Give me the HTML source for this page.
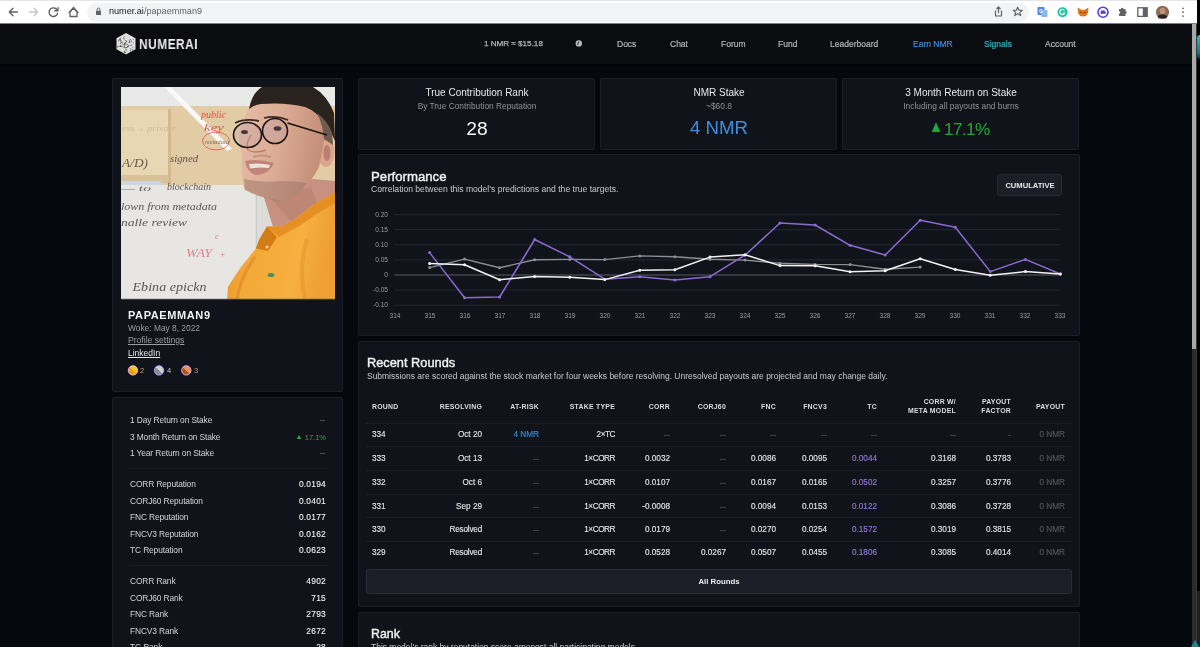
<!DOCTYPE html><html><head><meta charset="utf-8"><style>
html,body{margin:0;padding:0;width:1200px;height:647px;overflow:hidden;background:#05080d;font-family:"Liberation Sans", sans-serif;}
.t{position:absolute;white-space:pre;line-height:1;will-change:transform;}
.r{position:absolute;box-sizing:border-box;}
.card{position:absolute;box-sizing:border-box;background:#10131a;border:1px solid #1b1e26;border-radius:2px;}
svg{position:absolute;}
</style></head><body>
<div class="r" style="left:0px;top:0px;width:1197px;height:23px;background:#ffffff;"></div>
<div class="r" style="left:0px;top:0px;width:1197px;height:1px;background:#e4e6e9;"></div>
<div class="r" style="left:0px;top:23px;width:1197px;height:1px;background:#7d7e82;"></div>
<div class="r" style="left:87px;top:3px;width:942px;height:19px;background:#f1f3f4;border-radius:10px;"></div>
<svg style="left:0;top:0" width="240" height="23" viewBox="0 0 240 23">
<g fill="none" stroke-linecap="round" stroke-linejoin="round">
<path d="M17.5 12 H9.5 M13 8.2 L9.3 12 L13 15.8" stroke="#5f6368" stroke-width="1.4"/>
<path d="M29.5 12 H37.5 M34 8.2 L37.7 12 L34 15.8" stroke="#c4c7cc" stroke-width="1.4"/>
<path d="M57.2 10.2 A4.3 4.3 0 1 0 57.5 13.5" stroke="#5f6368" stroke-width="1.4"/>
<path d="M58 7.6 V10.8 H54.8" stroke="#5f6368" stroke-width="1.4"/>
<path d="M70 12 L73.5 8 L77 12 V16.5 H70 Z" stroke="#5f6368" stroke-width="1.3"/>
<path d="M69 12.6 L73.5 7.3 L78 12.6" stroke="#5f6368" stroke-width="1.3"/>
</g>
<rect x="96" y="10.8" width="5" height="4.2" rx="0.6" fill="#5f6368"/>
<path d="M97.1 10.9 V9.5 A1.4 1.4 0 0 1 99.9 9.5 V10.9" fill="none" stroke="#5f6368" stroke-width="1"/>
</svg>
<div class="t" style="left:109px;top:7.1px;font-size:9.1px;color:#202124">numer.ai<span style="color:#5f6368">/papaemman9</span></div>
<svg style="left:980;top:0;left:980px" width="220" height="23" viewBox="980 0 220 23">
<g fill="none" stroke="#5f6368" stroke-width="1.2" stroke-linejoin="round">
<path d="M995.5 10.5 V16 H1001.5 V10.5"/><path d="M998.5 13 V7 M996.5 9 L998.5 7 L1000.5 9"/>
<path d="M1017.7 7.2 L1019 10.2 L1022.2 10.4 L1019.8 12.4 L1020.6 15.6 L1017.7 13.8 L1014.8 15.6 L1015.6 12.4 L1013.2 10.4 L1016.4 10.2 Z"/>
</g>
<rect x="1037.5" y="7" width="7" height="8" rx="1" fill="#4a86e8"/>
<rect x="1041" y="10" width="6.5" height="7" rx="1" fill="#8ab4f8"/>
<text x="1039" y="13" font-size="5" fill="#fff" font-family="Liberation Sans" font-weight="700">G</text>
<circle cx="1062.5" cy="12.2" r="5" fill="#15c39a"/>
<path d="M1064.5 10.5 A2.6 2.6 0 1 0 1064.8 13 H1062.5" fill="none" stroke="#fff" stroke-width="1.2"/>
<path d="M1077.5 7.5 L1082 10 L1083 9.8 L1084 10 L1088.5 7.5 L1088 13 L1086 16 L1083 16.5 L1080 16 L1078 13 Z" fill="#e2761b"/>
<path d="M1080 12 L1082.3 13 M1086 12 L1083.7 13" stroke="#7a3a10" stroke-width="0.9"/>
<circle cx="1103" cy="12.2" r="5" fill="none" stroke="#5b3fd6" stroke-width="1.6"/>
<path d="M1100.5 12.5 A2.5 2 0 0 1 1105.5 12 L1106.5 13.5 L1101 14 Z" fill="#5b3fd6"/>
<path d="M1119 9 H1121 A1.2 1.2 0 0 1 1123.4 9 H1125.5 V11.3 A1.2 1.2 0 0 1 1125.5 13.7 V16 H1119 V13.7 A1.2 1.2 0 0 0 1119 11.3 Z" fill="#5f6368"/>
<rect x="1137.8" y="7.8" width="9.4" height="8.6" fill="none" stroke="#5f6368" stroke-width="1.3"/>
<rect x="1142.8" y="7.8" width="4.4" height="8.6" fill="#5f6368"/>
<circle cx="1162.5" cy="12.2" r="6.5" fill="#8a6a5a"/>
<path d="M1157.5 16.5 Q1162.5 12 1167.5 16.5 L1166 18.5 H1159 Z" fill="#2a2420"/>
<ellipse cx="1162.5" cy="11" rx="2.8" ry="3.2" fill="#c09070"/>
<circle cx="1183" cy="8.3" r="0.9" fill="#5f6368"/><circle cx="1183" cy="12.2" r="0.9" fill="#5f6368"/><circle cx="1183" cy="16.1" r="0.9" fill="#5f6368"/>
</svg>
<div class="r" style="left:0px;top:24px;width:1192px;height:40px;background:#0b0c10;"></div>
<div class="r" style="left:0px;top:64px;width:1192px;height:2px;background:#05060a;"></div>
<div class="r" style="left:1192px;top:24px;width:5px;height:623px;background:#2b2b2d;"></div>
<div class="r" style="left:1192px;top:24px;width:5px;height:325px;background:#a9a9a9;"></div>
<div class="r" style="left:1197px;top:0px;width:3px;height:647px;background:#000000;"></div>
<div class="r" style="left:1197px;top:591px;width:3px;height:56px;background:#1f1f21;"></div>
<div class="r" style="left:1196px;top:24px;width:1px;height:623px;background:#38383a;"></div>
<svg style="left:1190px;top:638px" width="10" height="9" viewBox="0 0 10 9"><path d="M1 9 L5 2 L9 9 Z" fill="#1a8a90"/></svg>
<div class="r" style="left:1196.5px;top:35px;width:3.5px;height:24px;background:linear-gradient(#23c0c4,#0f7f86 70%,#06363a);border-radius:3px 0 0 3px;"></div>
<svg style="left:114px;top:31px" width="24" height="26" viewBox="0 0 24 26"><defs><clipPath id="hx"><path d="M12 2 L21.5 7.3 V18.3 L12 23.6 L2.5 18.3 V7.3 Z"/></clipPath></defs><path d="M12 2 L21.5 7.3 V18.3 L12 23.6 L2.5 18.3 V7.3 Z" fill="#e0e0e0"/><g clip-path="url(#hx)"><rect x="9.2" y="7.6" width="1.7" height="0.7" fill="#5a5a5a" transform="rotate(0 9.2 7.6)"/><rect x="9.9" y="6.0" width="1.5" height="0.6" fill="#5a5a5a" transform="rotate(90 9.9 6.0)"/><rect x="10.7" y="9.1" width="1.6" height="0.6" fill="#5a5a5a" transform="rotate(0 10.7 9.1)"/><rect x="19.2" y="15.7" width="1.6" height="0.6" fill="#5a5a5a" transform="rotate(90 19.2 15.7)"/><rect x="4.8" y="8.8" width="1.6" height="0.7" fill="#5a5a5a" transform="rotate(90 4.8 8.8)"/><rect x="6.3" y="7.0" width="1.2" height="1.3" fill="#5a5a5a" transform="rotate(45 6.3 7.0)"/><rect x="5.6" y="14.7" width="1.1" height="0.7" fill="#5a5a5a" transform="rotate(0 5.6 14.7)"/><rect x="13.0" y="15.5" width="1.5" height="1.0" fill="#5a5a5a" transform="rotate(-45 13.0 15.5)"/><rect x="11.4" y="20.7" width="1.3" height="0.8" fill="#5a5a5a" transform="rotate(45 11.4 20.7)"/><rect x="15.2" y="9.1" width="1.6" height="1.0" fill="#5a5a5a" transform="rotate(-45 15.2 9.1)"/><rect x="15.7" y="9.9" width="2.2" height="0.7" fill="#5a5a5a" transform="rotate(90 15.7 9.9)"/><rect x="6.6" y="10.8" width="2.1" height="0.9" fill="#5a5a5a" transform="rotate(0 6.6 10.8)"/><rect x="16.2" y="14.7" width="2.0" height="0.9" fill="#5a5a5a" transform="rotate(-45 16.2 14.7)"/><rect x="13.5" y="14.9" width="1.4" height="1.3" fill="#5a5a5a" transform="rotate(-45 13.5 14.9)"/><rect x="11.6" y="16.3" width="0.9" height="1.2" fill="#5a5a5a" transform="rotate(90 11.6 16.3)"/><rect x="8.6" y="11.6" width="1.7" height="0.6" fill="#5a5a5a" transform="rotate(90 8.6 11.6)"/><rect x="9.7" y="15.4" width="1.5" height="0.8" fill="#5a5a5a" transform="rotate(-45 9.7 15.4)"/><rect x="6.1" y="9.2" width="1.3" height="1.3" fill="#5a5a5a" transform="rotate(0 6.1 9.2)"/><rect x="6.7" y="11.8" width="1.2" height="0.7" fill="#5a5a5a" transform="rotate(90 6.7 11.8)"/><rect x="17.8" y="9.7" width="1.4" height="0.9" fill="#5a5a5a" transform="rotate(90 17.8 9.7)"/><rect x="19.3" y="7.6" width="1.0" height="0.8" fill="#5a5a5a" transform="rotate(45 19.3 7.6)"/><rect x="4.2" y="19.1" width="1.1" height="0.8" fill="#5a5a5a" transform="rotate(45 4.2 19.1)"/><rect x="10.7" y="11.3" width="1.6" height="1.4" fill="#5a5a5a" transform="rotate(0 10.7 11.3)"/><rect x="11.3" y="19.8" width="2.1" height="1.1" fill="#5a5a5a" transform="rotate(90 11.3 19.8)"/><rect x="10.4" y="11.7" width="1.5" height="0.9" fill="#5a5a5a" transform="rotate(45 10.4 11.7)"/><rect x="5.1" y="8.5" width="1.0" height="0.9" fill="#5a5a5a" transform="rotate(0 5.1 8.5)"/><rect x="5.6" y="14.6" width="1.6" height="1.4" fill="#5a5a5a" transform="rotate(0 5.6 14.6)"/><rect x="5.1" y="8.5" width="1.3" height="1.1" fill="#5a5a5a" transform="rotate(-45 5.1 8.5)"/><rect x="13.6" y="13.1" width="1.0" height="1.0" fill="#5a5a5a" transform="rotate(90 13.6 13.1)"/><rect x="11.7" y="10.3" width="1.0" height="1.2" fill="#5a5a5a" transform="rotate(-45 11.7 10.3)"/><rect x="11.7" y="16.8" width="1.5" height="0.8" fill="#5a5a5a" transform="rotate(-45 11.7 16.8)"/><rect x="6.3" y="14.2" width="0.8" height="1.0" fill="#5a5a5a" transform="rotate(0 6.3 14.2)"/><rect x="15.1" y="9.4" width="1.3" height="0.7" fill="#5a5a5a" transform="rotate(45 15.1 9.4)"/><rect x="12.5" y="18.2" width="1.3" height="0.8" fill="#5a5a5a" transform="rotate(45 12.5 18.2)"/><rect x="16.9" y="18.9" width="1.8" height="0.8" fill="#5a5a5a" transform="rotate(90 16.9 18.9)"/><rect x="9.7" y="5.5" width="0.8" height="0.8" fill="#5a5a5a" transform="rotate(-45 9.7 5.5)"/><rect x="7.1" y="15.3" width="1.3" height="1.2" fill="#5a5a5a" transform="rotate(-45 7.1 15.3)"/><rect x="19.3" y="11.2" width="1.1" height="0.8" fill="#5a5a5a" transform="rotate(45 19.3 11.2)"/><rect x="9.4" y="13.2" width="2.2" height="1.1" fill="#5a5a5a" transform="rotate(0 9.4 13.2)"/><rect x="11.7" y="16.1" width="1.9" height="0.7" fill="#5a5a5a" transform="rotate(0 11.7 16.1)"/><rect x="18.6" y="18.3" width="1.9" height="1.0" fill="#5a5a5a" transform="rotate(45 18.6 18.3)"/><rect x="10.9" y="15.8" width="0.9" height="1.4" fill="#5a5a5a" transform="rotate(90 10.9 15.8)"/><rect x="11.4" y="17.6" width="0.9" height="0.7" fill="#5a5a5a" transform="rotate(45 11.4 17.6)"/><rect x="4.4" y="15.0" width="1.5" height="1.1" fill="#5a5a5a" transform="rotate(90 4.4 15.0)"/><rect x="14.5" y="11.0" width="1.6" height="0.7" fill="#5a5a5a" transform="rotate(0 14.5 11.0)"/><rect x="16.8" y="17.3" width="0.9" height="1.2" fill="#5a5a5a" transform="rotate(45 16.8 17.3)"/></g></svg>
<div class="t" style="top:36.97px;font-size:14px;color:#ececec;font-weight:700;letter-spacing:0.6px;left:139px;transform:scaleX(0.85);transform-origin:0 0;">NUMERAI</div>
<div class="t" style="top:39.66px;font-size:8.1px;color:#b3b4b8;left:483.6px;-webkit-text-stroke:0.25px #b3b4b8;">1 NMR ≈ $15.18</div>
<svg style="left:575px;top:40px" width="8" height="8" viewBox="0 0 8 8">
<circle cx="3.8" cy="3.4" r="3.2" fill="#b8babe"/><path d="M3.7 1.1 Q1.7 3 2.6 5.8 Q4.3 3.4 3.7 1.1 Z" fill="#0b0c10"/>
</svg>
<div class="t" style="top:39.82px;font-size:8.5px;color:#b3b4b8;left:617px;-webkit-text-stroke:0.2px #b3b4b8;">Docs</div>
<div class="t" style="top:39.82px;font-size:8.5px;color:#b3b4b8;left:669.6px;-webkit-text-stroke:0.2px #b3b4b8;">Chat</div>
<div class="t" style="top:39.82px;font-size:8.5px;color:#b3b4b8;left:720.6px;-webkit-text-stroke:0.2px #b3b4b8;">Forum</div>
<div class="t" style="top:39.82px;font-size:8.5px;color:#b3b4b8;left:777.6px;-webkit-text-stroke:0.2px #b3b4b8;">Fund</div>
<div class="t" style="top:39.82px;font-size:8.5px;color:#b3b4b8;left:830px;-webkit-text-stroke:0.2px #b3b4b8;">Leaderboard</div>
<div class="t" style="top:39.82px;font-size:8.5px;color:#3e8fd9;left:912.5px;-webkit-text-stroke:0.2px #3e8fd9;">Earn NMR</div>
<div class="t" style="top:39.82px;font-size:8.5px;color:#2fb2c2;left:983.5px;-webkit-text-stroke:0.2px #2fb2c2;">Signals</div>
<div class="t" style="top:39.82px;font-size:8.5px;color:#b3b4b8;left:1045px;-webkit-text-stroke:0.2px #b3b4b8;">Account</div>
<div class="card" style="left:112px;top:78px;width:231px;height:314px"></div>
<svg style="left:121px;top:87px" width="214" height="213" viewBox="0 0 214 213">
<defs>
<filter id="bl" x="-10%" y="-10%" width="120%" height="120%"><feGaussianBlur stdDeviation="0.6"/></filter>
<filter id="bl3" x="-10%" y="-10%" width="120%" height="120%"><feGaussianBlur stdDeviation="0.55"/></filter>
<linearGradient id="skin" x1="0" y1="0" x2="1" y2="0.2">
<stop offset="0" stop-color="#e6bca8"/><stop offset="0.5" stop-color="#dcac94"/><stop offset="1" stop-color="#c48e78"/></linearGradient>
<linearGradient id="shirt" x1="0" y1="0" x2="1" y2="0.2">
<stop offset="0" stop-color="#e38f20"/><stop offset="0.3" stop-color="#f3a836"/><stop offset="0.75" stop-color="#f6b040"/><stop offset="1" stop-color="#eea034"/></linearGradient>
</defs>
<rect width="214" height="213" fill="#e6e5e1"/>
<g filter="url(#bl)">
<rect x="0" y="0" width="214" height="21" fill="#e9e9e8"/>
<rect x="0" y="19" width="214" height="79" fill="#e2cca6"/>
<rect x="0" y="23" width="47" height="65" fill="#e9d7b4"/>
<rect x="47" y="22" width="3" height="75" fill="#d2b990"/>
<rect x="0" y="88" width="47" height="8" fill="#d8c098"/>
<rect x="0" y="94" width="40" height="9" fill="#cbd6df"/>
<rect x="0" y="98" width="136" height="115" fill="#e7e6e2"/>
<rect x="136" y="98" width="78" height="115" fill="#dddcd8"/>
<rect x="134.8" y="98" width="1" height="66" fill="#c4c6c8"/>
<polygon points="43,0 50,0 111,62 106,64" fill="#fafaf8"/>
</g>
<g font-family="Liberation Serif" font-style="italic" filter="url(#bl)" opacity="0.88" lengthAdjust="spacingAndGlyphs">
<text x="1" y="44" font-size="8" fill="#cdb690" textLength="54" lengthAdjust="spacingAndGlyphs">ess→ private</text>
<text x="80" y="31" font-size="10" fill="#d8433c" textLength="25" lengthAdjust="spacingAndGlyphs">public</text>
<text x="83" y="44" font-size="10" fill="#d8433c" textLength="20" lengthAdjust="spacingAndGlyphs">key</text>
<ellipse cx="95" cy="54" rx="13.5" ry="9" fill="none" stroke="#d8433c" stroke-width="0.8"/>
<text x="84" y="57" font-size="7" fill="#7a5a48" textLength="24" lengthAdjust="spacingAndGlyphs">metadata</text>
<text x="1" y="80" font-size="13" fill="#5a4a3a" textLength="26" lengthAdjust="spacingAndGlyphs">A/D)</text>
<text x="49" y="75" font-size="10" fill="#4a3e34" textLength="28" lengthAdjust="spacingAndGlyphs">signed</text>
<text x="46" y="103" font-size="10" fill="#4a3e34" textLength="44" lengthAdjust="spacingAndGlyphs">blockchain</text>
<text x="0" y="104" font-size="8" fill="#4a4a4a" textLength="30" lengthAdjust="spacingAndGlyphs">—  to</text>
<text x="0" y="122.5" font-size="11" fill="#444" textLength="96" lengthAdjust="spacingAndGlyphs">lown from  metadata</text>
<text x="0" y="139" font-size="11" fill="#444" textLength="66" lengthAdjust="spacingAndGlyphs">nalle   review</text>
<text x="65" y="169.5" font-size="13" fill="#e56e84" textLength="26" lengthAdjust="spacingAndGlyphs">WAY</text>
<text x="94" y="152" font-size="9" fill="#e56e84">c</text>
<text x="98" y="171" font-size="10" fill="#e56e84">+</text>
<text x="11.5" y="203.5" font-size="12" fill="#444" textLength="74" lengthAdjust="spacingAndGlyphs">Ebina  epickn</text>
</g>
<g filter="url(#bl3)">
<!-- neck -->
<path d="M141 104 L192 92 L214 94 L214 108 L192 119 L177 131 L161 140 L152 140 Z" fill="#c89080"/>
<path d="M150 112 L190 100 L196 116 L170 134 Z" fill="#b07a68" opacity="0.45"/>
<!-- ear -->
<ellipse cx="205" cy="65" rx="8.5" ry="15" fill="#dba48c"/>
<ellipse cx="206" cy="66" rx="3.5" ry="8" fill="#b98070"/>
<!-- face -->
<path d="M131 14 Q141 8 177 8 Q190 13 202 24 Q210 36 203 54 L198 80 Q192 92 183 100 Q174 111 166 115 Q140 111 123 102 Q120 85 121 68 Q117 55 119 42 Q124 28 131 14 Z" fill="url(#skin)"/>
<!-- hair -->
<path d="M128 22 Q131 6 141 0 L192 0 Q206 8 213 26 L214 54 Q210 44 204 36 Q195 24 184 20 Q165 15 140 17 Q133 18 128 22 Z" fill="#2a221d"/>
<path d="M196 26 Q207 34 211 46 L212 58 L203 52 Q202 38 196 26 Z" fill="#6e5a50"/>
<!-- beard -->
<path d="M123 92 Q140 96 160 94 Q175 94 186 96 Q176 110 166 115 Q140 112 124 103 Z" fill="#9a7464" opacity="0.5"/>
<path d="M132 70 Q140 67 150 70" stroke="#a88070" stroke-width="2" fill="none" opacity="0.6"/>
<!-- mouth -->
<path d="M124 74 Q138 71 153 76 Q148 88 134 88 Q126 85 124 74 Z" fill="#c08478"/>
<path d="M128 77 Q139 75.5 149 78 L148 81 Q139 80 129 81.5 Z" fill="#ece4dc"/>
<!-- nose -->
<path d="M130 48 Q124 58 127 63 Q134 67 145 63" fill="none" stroke="#b88068" stroke-width="1.4"/>
<!-- eyebrows -->
<path d="M114 36 Q124 31 138 34 M143 31 Q155 28 167 33" stroke="#3a2a24" stroke-width="1.8" fill="none"/>
<!-- eyes -->
<ellipse cx="123.5" cy="45" rx="3.4" ry="2.1" fill="#2a1e1a"/>
<ellipse cx="156.5" cy="41.5" rx="3.8" ry="2.3" fill="#2a1e1a"/>
<!-- glasses -->
<ellipse cx="126.5" cy="48" rx="14" ry="12.5" fill="#a890a8" fill-opacity="0.22" stroke="#1c1412" stroke-width="1.6"/>
<ellipse cx="154" cy="44" rx="12.5" ry="12.5" fill="#a890a8" fill-opacity="0.22" stroke="#1c1412" stroke-width="1.6"/>
<path d="M166.5 36 L206 48" stroke="#1c1412" stroke-width="1.6" fill="none"/>
<!-- shirt -->
<path d="M106 213 L107 200 Q113 190 120 180 L135 161.5 L138 153 L146 139.5 L161 139.5 L177 130 L192 118 L214 105.5 L214 213 Z" fill="url(#shirt)"/>
<path d="M146 139.5 L161 139.5 L177 130 L192 118 L214 105.5 L214 116 Q196 126 180 138 L158 150 Z" fill="#e68f22"/>
<path d="M138 153 L146 139.5 L156 150 L147 164 L135 161.5 Z" fill="#d27c18"/>
<path d="M116 213 Q118 192 134 170" stroke="#d58422" stroke-width="3" fill="none" opacity="0.55"/>
<path d="M184 213 Q177 182 186 152" stroke="#dc8e26" stroke-width="4" fill="none" opacity="0.4"/>
<ellipse cx="150" cy="188" rx="3.5" ry="2" fill="#4a9060"/>
<circle cx="146" cy="160" r="1.5" fill="#f2d4a8"/>
</g>
<rect x="0" y="211.8" width="214" height="1.2" fill="#3a3c40"/>
</svg>

<div class="t" style="top:309.70px;font-size:11px;color:#f2f2f2;font-weight:700;letter-spacing:0.6px;left:128px;">PAPAEMMAN9</div>
<div class="t" style="top:323.90px;font-size:8.4px;color:#9b9da3;left:128px;">Woke: May 8, 2022</div>
<div class="t" style="top:336.03px;font-size:8.6px;color:#9b9da3;left:128px;text-decoration:underline;text-underline-offset:1px;">Profile settings</div>
<div class="t" style="top:349.12px;font-size:8.5px;color:#e6e6e6;left:128px;text-decoration:underline;text-underline-offset:1px;">LinkedIn</div>
<svg style="left:124px;top:363px" width="80" height="16" viewBox="124 363 80 16">
<defs>
<linearGradient id="g1" x1="0" y1="1" x2="1" y2="0"><stop offset="0.5" stop-color="#f29a0e"/><stop offset="0.5" stop-color="#f7c51c"/></linearGradient>
<linearGradient id="g2" x1="0" y1="1" x2="1" y2="0"><stop offset="0.5" stop-color="#8c8c8c"/><stop offset="0.5" stop-color="#cfcfcf"/></linearGradient>
<linearGradient id="g3" x1="0" y1="1" x2="1" y2="0"><stop offset="0.5" stop-color="#a8581c"/><stop offset="0.5" stop-color="#e3915a"/></linearGradient>
</defs>
<circle cx="133" cy="370.4" r="5.6" fill="#2e1470"/>
<circle cx="133" cy="370.4" r="4.6" fill="url(#g1)" stroke="#f6c8c0" stroke-width="0.9"/>
<circle cx="159" cy="370.4" r="5.6" fill="#2e1470"/>
<circle cx="159" cy="370.4" r="4.6" fill="url(#g2)" stroke="#b7a6f4" stroke-width="0.9"/>
<circle cx="186.3" cy="370.4" r="5.6" fill="#2e1470"/>
<circle cx="186.3" cy="370.4" r="4.6" fill="url(#g3)" stroke="#f2b6c6" stroke-width="0.9"/>
</svg>
<div class="t" style="top:366.96px;font-size:7.5px;color:#c9a24e;left:140.3px;">2</div>
<div class="t" style="top:366.96px;font-size:7.5px;color:#c6c6c6;left:167px;">4</div>
<div class="t" style="top:366.96px;font-size:7.5px;color:#c29272;left:193.7px;">3</div>
<div class="card" style="left:112px;top:397px;width:231px;height:300px"></div>
<div class="t" style="top:415.90px;font-size:8.4px;color:#d3d4d7;letter-spacing:-0.12px;left:129.5px;">1 Day Return on Stake</div>
<div class="t" style="top:432.90px;font-size:8.4px;color:#d3d4d7;letter-spacing:-0.12px;left:129.5px;">3 Month Return on Stake</div>
<div class="t" style="top:449.40px;font-size:8.4px;color:#d3d4d7;letter-spacing:-0.12px;left:129.5px;">1 Year Return on Stake</div>
<div class="r" style="left:319.8px;top:419.8px;width:5.199999999999989px;height:1.0px;background:#4b4e55;"></div>
<div class="r" style="left:319.8px;top:452.9px;width:5.199999999999989px;height:1.0px;background:#4b4e55;"></div>
<svg style="left:296px;top:433.5px" width="6" height="6" viewBox="0 0 6 6"><path d="M0.8 5 L3 1 L5.2 5 Z" fill="#22b034"/></svg>
<div class="t" style="top:433.66px;font-size:7.5px;color:#22b034;left:-274px;width:600px;text-align:right;">17.1%</div>
<div class="r" style="left:128.5px;top:468px;width:199.0px;height:1px;background:#1a1d24;"></div>
<div class="t" style="top:479.90px;font-size:8.4px;color:#d3d4d7;letter-spacing:-0.12px;left:129.5px;">CORR Reputation</div>
<div class="t" style="top:479.90px;font-size:8.4px;color:#f4f4f4;letter-spacing:0.25px;left:-274px;width:600px;text-align:right;-webkit-text-stroke:0.1px #f4f4f4;">0.0194</div>
<div class="t" style="top:496.60px;font-size:8.4px;color:#d3d4d7;letter-spacing:-0.12px;left:129.5px;">CORJ60 Reputation</div>
<div class="t" style="top:496.60px;font-size:8.4px;color:#f4f4f4;letter-spacing:0.25px;left:-274px;width:600px;text-align:right;-webkit-text-stroke:0.1px #f4f4f4;">0.0401</div>
<div class="t" style="top:513.20px;font-size:8.4px;color:#d3d4d7;letter-spacing:-0.12px;left:129.5px;">FNC Reputation</div>
<div class="t" style="top:513.20px;font-size:8.4px;color:#f4f4f4;letter-spacing:0.25px;left:-274px;width:600px;text-align:right;-webkit-text-stroke:0.1px #f4f4f4;">0.0177</div>
<div class="t" style="top:529.50px;font-size:8.4px;color:#d3d4d7;letter-spacing:-0.12px;left:129.5px;">FNCV3 Reputation</div>
<div class="t" style="top:529.50px;font-size:8.4px;color:#f4f4f4;letter-spacing:0.25px;left:-274px;width:600px;text-align:right;-webkit-text-stroke:0.1px #f4f4f4;">0.0162</div>
<div class="t" style="top:546.10px;font-size:8.4px;color:#d3d4d7;letter-spacing:-0.12px;left:129.5px;">TC Reputation</div>
<div class="t" style="top:546.10px;font-size:8.4px;color:#f4f4f4;letter-spacing:0.25px;left:-274px;width:600px;text-align:right;-webkit-text-stroke:0.1px #f4f4f4;">0.0623</div>
<div class="r" style="left:128.5px;top:565px;width:199.0px;height:1px;background:#1a1d24;"></div>
<div class="t" style="top:577.40px;font-size:8.4px;color:#d3d4d7;letter-spacing:-0.12px;left:129.5px;">CORR Rank</div>
<div class="t" style="top:577.40px;font-size:8.4px;color:#f4f4f4;letter-spacing:0.25px;left:-274px;width:600px;text-align:right;-webkit-text-stroke:0.1px #f4f4f4;">4902</div>
<div class="t" style="top:593.70px;font-size:8.4px;color:#d3d4d7;letter-spacing:-0.12px;left:129.5px;">CORJ60 Rank</div>
<div class="t" style="top:593.70px;font-size:8.4px;color:#f4f4f4;letter-spacing:0.25px;left:-274px;width:600px;text-align:right;-webkit-text-stroke:0.1px #f4f4f4;">715</div>
<div class="t" style="top:610.30px;font-size:8.4px;color:#d3d4d7;letter-spacing:-0.12px;left:129.5px;">FNC Rank</div>
<div class="t" style="top:610.30px;font-size:8.4px;color:#f4f4f4;letter-spacing:0.25px;left:-274px;width:600px;text-align:right;-webkit-text-stroke:0.1px #f4f4f4;">2793</div>
<div class="t" style="top:626.90px;font-size:8.4px;color:#d3d4d7;letter-spacing:-0.12px;left:129.5px;">FNCV3 Rank</div>
<div class="t" style="top:626.90px;font-size:8.4px;color:#f4f4f4;letter-spacing:0.25px;left:-274px;width:600px;text-align:right;-webkit-text-stroke:0.1px #f4f4f4;">2672</div>
<div class="t" style="top:643.40px;font-size:8.4px;color:#d3d4d7;letter-spacing:-0.12px;left:129.5px;">TC Rank</div>
<div class="t" style="top:643.40px;font-size:8.4px;color:#f4f4f4;letter-spacing:0.25px;left:-274px;width:600px;text-align:right;-webkit-text-stroke:0.1px #f4f4f4;">28</div>
<div class="card" style="left:358px;top:78px;width:237px;height:72px"></div>
<div class="card" style="left:600px;top:78px;width:237px;height:72px"></div>
<div class="card" style="left:842px;top:78px;width:237px;height:72px"></div>
<div class="t" style="top:88.35px;font-size:10px;color:#e8e8ea;left:-23.5px;width:1000px;text-align:center;">True Contribution Rank</div>
<div class="t" style="top:101.94px;font-size:8.36px;color:#8f9197;left:-23.5px;width:1000px;text-align:center;">By True Contribution Reputation</div>
<div class="t" style="top:118.98px;font-size:19.2px;color:#f4f4f4;left:-23.5px;width:1000px;text-align:center;">28</div>
<div class="t" style="top:88.25px;font-size:10px;color:#e8e8ea;left:218.5px;width:1000px;text-align:center;">NMR Stake</div>
<div class="t" style="top:102.00px;font-size:8.4px;color:#8f9197;left:218.5px;width:1000px;text-align:center;">~$60.8</div>
<div class="t" style="top:119.48px;font-size:18.6px;color:#3b8fe0;left:218.5px;width:1000px;text-align:center;">4 NMR</div>
<div class="t" style="top:88.41px;font-size:10.05px;color:#e8e8ea;left:460.5px;width:1000px;text-align:center;">3 Month Return on Stake</div>
<div class="t" style="top:101.62px;font-size:8.38px;color:#8f9197;left:460.5px;width:1000px;text-align:center;">Including all payouts and burns</div>
<svg style="left:931px;top:121px" width="11" height="12" viewBox="0 0 11 12"><path d="M0.8 11 L5 1.2 L9.4 11 Z" fill="#22a834"/></svg>
<div class="t" style="top:120.67px;font-size:17.2px;color:#22a834;left:943.9px;letter-spacing:-0.6px;">17.1%</div>
<div class="card" style="left:358px;top:154px;width:722px;height:182px"></div>
<div class="t" style="top:169.85px;font-size:13.2px;color:#f2f2f2;left:370.5px;-webkit-text-stroke:0.4px #f2f2f2;">Performance</div>
<div class="t" style="top:185.45px;font-size:8.58px;color:#c9cacd;left:370.5px;">Correlation between this model’s predictions and the true targets.</div>
<div class="r" style="left:997px;top:174px;width:65px;height:22px;background:#1b1e27;border:1px solid #262a33;border-radius:3px"></div>
<div class="t" style="top:181.78px;font-size:7.6px;color:#e8e8e8;font-weight:700;left:529.5px;width:1000px;text-align:center;">CUMULATIVE</div>
<svg style="left:0;top:0" width="1200" height="647" viewBox="0 0 1200 647">
<line x1="394.5" x2="1060.4" y1="214.60" y2="214.60" stroke="#242831" stroke-width="1"/>
<line x1="394.5" x2="1060.4" y1="229.70" y2="229.70" stroke="#242831" stroke-width="1"/>
<line x1="394.5" x2="1060.4" y1="244.80" y2="244.80" stroke="#242831" stroke-width="1"/>
<line x1="394.5" x2="1060.4" y1="259.90" y2="259.90" stroke="#242831" stroke-width="1"/>
<line x1="394.5" x2="1060.4" y1="290.10" y2="290.10" stroke="#242831" stroke-width="1"/>
<line x1="394.5" x2="1060.4" y1="305.20" y2="305.20" stroke="#242831" stroke-width="1"/>
<line x1="394.5" x2="1060.4" y1="275" y2="275" stroke="#5a5d64" stroke-width="1"/>
<polyline points="429.6,267.6 464.6,259.1 499.6,267.7 534.7,259.8 569.8,259.4 604.8,259.6 639.8,255.9 674.9,256.7 710.0,259.2 745.0,260.1 780.0,263.3 815.1,264.4 850.1,264.6 885.2,269.3 920.2,267.1" fill="none" stroke="#8d8e92" stroke-width="1.4" stroke-linejoin="round"/>
<circle cx="429.6" cy="267.6" r="1.5" fill="#8d8e92"/>
<circle cx="464.6" cy="259.1" r="1.5" fill="#8d8e92"/>
<circle cx="499.6" cy="267.7" r="1.5" fill="#8d8e92"/>
<circle cx="534.7" cy="259.8" r="1.5" fill="#8d8e92"/>
<circle cx="569.8" cy="259.4" r="1.5" fill="#8d8e92"/>
<circle cx="604.8" cy="259.6" r="1.5" fill="#8d8e92"/>
<circle cx="639.8" cy="255.9" r="1.5" fill="#8d8e92"/>
<circle cx="674.9" cy="256.7" r="1.5" fill="#8d8e92"/>
<circle cx="710.0" cy="259.2" r="1.5" fill="#8d8e92"/>
<circle cx="745.0" cy="260.1" r="1.5" fill="#8d8e92"/>
<circle cx="780.0" cy="263.3" r="1.5" fill="#8d8e92"/>
<circle cx="815.1" cy="264.4" r="1.5" fill="#8d8e92"/>
<circle cx="850.1" cy="264.6" r="1.5" fill="#8d8e92"/>
<circle cx="885.2" cy="269.3" r="1.5" fill="#8d8e92"/>
<circle cx="920.2" cy="267.1" r="1.5" fill="#8d8e92"/>
<polyline points="429.6,252.6 464.6,297.8 499.6,297.0 534.7,239.5 569.8,256.8 604.8,279.2 639.8,276.7 674.9,280.0 710.0,276.7 745.0,255.2 780.0,223.0 815.1,225.0 850.1,245.3 885.2,255.0 920.2,220.2 955.3,227.2 990.3,271.6 1025.4,259.4 1060.4,274.0" fill="none" stroke="#8a6bd0" stroke-width="1.5" stroke-linejoin="round"/>
<circle cx="429.6" cy="252.6" r="1.5" fill="#8a6bd0"/>
<circle cx="464.6" cy="297.8" r="1.5" fill="#8a6bd0"/>
<circle cx="499.6" cy="297.0" r="1.5" fill="#8a6bd0"/>
<circle cx="534.7" cy="239.5" r="1.5" fill="#8a6bd0"/>
<circle cx="569.8" cy="256.8" r="1.5" fill="#8a6bd0"/>
<circle cx="604.8" cy="279.2" r="1.5" fill="#8a6bd0"/>
<circle cx="639.8" cy="276.7" r="1.5" fill="#8a6bd0"/>
<circle cx="674.9" cy="280.0" r="1.5" fill="#8a6bd0"/>
<circle cx="710.0" cy="276.7" r="1.5" fill="#8a6bd0"/>
<circle cx="745.0" cy="255.2" r="1.5" fill="#8a6bd0"/>
<circle cx="780.0" cy="223.0" r="1.5" fill="#8a6bd0"/>
<circle cx="815.1" cy="225.0" r="1.5" fill="#8a6bd0"/>
<circle cx="850.1" cy="245.3" r="1.5" fill="#8a6bd0"/>
<circle cx="885.2" cy="255.0" r="1.5" fill="#8a6bd0"/>
<circle cx="920.2" cy="220.2" r="1.5" fill="#8a6bd0"/>
<circle cx="955.3" cy="227.2" r="1.5" fill="#8a6bd0"/>
<circle cx="990.3" cy="271.6" r="1.5" fill="#8a6bd0"/>
<circle cx="1025.4" cy="259.4" r="1.5" fill="#8a6bd0"/>
<circle cx="1060.4" cy="274.0" r="1.5" fill="#8a6bd0"/>
<polyline points="429.6,263.5 464.6,264.7 499.6,279.7 534.7,276.5 569.8,277.2 604.8,279.6 639.8,270.2 674.9,269.7 710.0,257.1 745.0,254.8 780.0,265.6 815.1,265.7 850.1,271.8 885.2,270.7 920.2,258.7 955.3,269.5 990.3,275.3 1025.4,271.6 1060.4,274.0" fill="none" stroke="#f2f2f2" stroke-width="1.5" stroke-linejoin="round"/>
<circle cx="429.6" cy="263.5" r="1.5" fill="#f2f2f2"/>
<circle cx="464.6" cy="264.7" r="1.5" fill="#f2f2f2"/>
<circle cx="499.6" cy="279.7" r="1.5" fill="#f2f2f2"/>
<circle cx="534.7" cy="276.5" r="1.5" fill="#f2f2f2"/>
<circle cx="569.8" cy="277.2" r="1.5" fill="#f2f2f2"/>
<circle cx="604.8" cy="279.6" r="1.5" fill="#f2f2f2"/>
<circle cx="639.8" cy="270.2" r="1.5" fill="#f2f2f2"/>
<circle cx="674.9" cy="269.7" r="1.5" fill="#f2f2f2"/>
<circle cx="710.0" cy="257.1" r="1.5" fill="#f2f2f2"/>
<circle cx="745.0" cy="254.8" r="1.5" fill="#f2f2f2"/>
<circle cx="780.0" cy="265.6" r="1.5" fill="#f2f2f2"/>
<circle cx="815.1" cy="265.7" r="1.5" fill="#f2f2f2"/>
<circle cx="850.1" cy="271.8" r="1.5" fill="#f2f2f2"/>
<circle cx="885.2" cy="270.7" r="1.5" fill="#f2f2f2"/>
<circle cx="920.2" cy="258.7" r="1.5" fill="#f2f2f2"/>
<circle cx="955.3" cy="269.5" r="1.5" fill="#f2f2f2"/>
<circle cx="990.3" cy="275.3" r="1.5" fill="#f2f2f2"/>
<circle cx="1025.4" cy="271.6" r="1.5" fill="#f2f2f2"/>
<circle cx="1060.4" cy="274.0" r="1.5" fill="#f2f2f2"/>
</svg>
<div class="t" style="top:211.72px;font-size:6.6px;color:#9a9ca1;left:-211.7px;width:600px;text-align:right;">0.20</div>
<div class="t" style="top:226.82px;font-size:6.6px;color:#9a9ca1;left:-211.7px;width:600px;text-align:right;">0.15</div>
<div class="t" style="top:241.92px;font-size:6.6px;color:#9a9ca1;left:-211.7px;width:600px;text-align:right;">0.10</div>
<div class="t" style="top:257.02px;font-size:6.6px;color:#9a9ca1;left:-211.7px;width:600px;text-align:right;">0.05</div>
<div class="t" style="top:272.12px;font-size:6.6px;color:#9a9ca1;left:-211.7px;width:600px;text-align:right;">0</div>
<div class="t" style="top:287.22px;font-size:6.6px;color:#9a9ca1;left:-211.7px;width:600px;text-align:right;">-0.05</div>
<div class="t" style="top:302.32px;font-size:6.6px;color:#9a9ca1;left:-211.7px;width:600px;text-align:right;">-0.10</div>
<div class="t" style="top:312.52px;font-size:6.6px;color:#9a9ca1;left:-105.5px;width:1000px;text-align:center;">314</div>
<div class="t" style="top:312.52px;font-size:6.6px;color:#9a9ca1;left:-70.44999999999999px;width:1000px;text-align:center;">315</div>
<div class="t" style="top:312.52px;font-size:6.6px;color:#9a9ca1;left:-35.39999999999998px;width:1000px;text-align:center;">316</div>
<div class="t" style="top:312.52px;font-size:6.6px;color:#9a9ca1;left:-0.35000000000002274px;width:1000px;text-align:center;">317</div>
<div class="t" style="top:312.52px;font-size:6.6px;color:#9a9ca1;left:34.700000000000045px;width:1000px;text-align:center;">318</div>
<div class="t" style="top:312.52px;font-size:6.6px;color:#9a9ca1;left:69.75px;width:1000px;text-align:center;">319</div>
<div class="t" style="top:312.52px;font-size:6.6px;color:#9a9ca1;left:104.79999999999995px;width:1000px;text-align:center;">320</div>
<div class="t" style="top:312.52px;font-size:6.6px;color:#9a9ca1;left:139.8499999999999px;width:1000px;text-align:center;">321</div>
<div class="t" style="top:312.52px;font-size:6.6px;color:#9a9ca1;left:174.89999999999998px;width:1000px;text-align:center;">322</div>
<div class="t" style="top:312.52px;font-size:6.6px;color:#9a9ca1;left:209.95000000000005px;width:1000px;text-align:center;">323</div>
<div class="t" style="top:312.52px;font-size:6.6px;color:#9a9ca1;left:245.0px;width:1000px;text-align:center;">324</div>
<div class="t" style="top:312.52px;font-size:6.6px;color:#9a9ca1;left:280.04999999999995px;width:1000px;text-align:center;">325</div>
<div class="t" style="top:312.52px;font-size:6.6px;color:#9a9ca1;left:315.0999999999999px;width:1000px;text-align:center;">326</div>
<div class="t" style="top:312.52px;font-size:6.6px;color:#9a9ca1;left:350.15px;width:1000px;text-align:center;">327</div>
<div class="t" style="top:312.52px;font-size:6.6px;color:#9a9ca1;left:385.19999999999993px;width:1000px;text-align:center;">328</div>
<div class="t" style="top:312.52px;font-size:6.6px;color:#9a9ca1;left:420.25px;width:1000px;text-align:center;">329</div>
<div class="t" style="top:312.52px;font-size:6.6px;color:#9a9ca1;left:455.29999999999995px;width:1000px;text-align:center;">330</div>
<div class="t" style="top:312.52px;font-size:6.6px;color:#9a9ca1;left:490.3499999999999px;width:1000px;text-align:center;">331</div>
<div class="t" style="top:312.52px;font-size:6.6px;color:#9a9ca1;left:525.4000000000001px;width:1000px;text-align:center;">332</div>
<div class="t" style="top:312.52px;font-size:6.6px;color:#9a9ca1;left:560.4499999999998px;width:1000px;text-align:center;">333</div>
<div class="card" style="left:358px;top:341px;width:722px;height:266px"></div>
<div class="t" style="top:356.68px;font-size:12.8px;color:#f2f2f2;left:366.7px;-webkit-text-stroke:0.4px #f2f2f2;">Recent Rounds</div>
<div class="t" style="top:372.04px;font-size:8.47px;color:#c9cacd;left:366.7px;">Submissions are scored against the stock market for four weeks before resolving. Unresolved payouts are projected and may change daily.</div>
<div class="t" style="top:404.07px;font-size:6.9px;color:#dcdde0;font-weight:700;letter-spacing:0.25px;left:372px;">ROUND</div>
<div class="t" style="top:404.07px;font-size:6.9px;color:#dcdde0;font-weight:700;letter-spacing:0.25px;left:-118px;width:600px;text-align:right;">RESOLVING</div>
<div class="t" style="top:404.07px;font-size:6.9px;color:#dcdde0;font-weight:700;letter-spacing:0.25px;left:-61px;width:600px;text-align:right;">AT-RISK</div>
<div class="t" style="top:404.07px;font-size:6.9px;color:#dcdde0;font-weight:700;letter-spacing:0.25px;left:15px;width:600px;text-align:right;">STAKE TYPE</div>
<div class="t" style="top:404.07px;font-size:6.9px;color:#dcdde0;font-weight:700;letter-spacing:0.25px;left:70px;width:600px;text-align:right;">CORR</div>
<div class="t" style="top:404.07px;font-size:6.9px;color:#dcdde0;font-weight:700;letter-spacing:0.25px;left:126px;width:600px;text-align:right;">CORJ60</div>
<div class="t" style="top:404.07px;font-size:6.9px;color:#dcdde0;font-weight:700;letter-spacing:0.25px;left:176px;width:600px;text-align:right;">FNC</div>
<div class="t" style="top:404.07px;font-size:6.9px;color:#dcdde0;font-weight:700;letter-spacing:0.25px;left:227px;width:600px;text-align:right;">FNCV3</div>
<div class="t" style="top:404.07px;font-size:6.9px;color:#dcdde0;font-weight:700;letter-spacing:0.25px;left:277px;width:600px;text-align:right;">TC</div>
<div class="t" style="top:404.07px;font-size:6.9px;color:#dcdde0;font-weight:700;letter-spacing:0.25px;left:465px;width:600px;text-align:right;">PAYOUT</div>
<div class="t" style="top:398.57px;font-size:6.9px;color:#dcdde0;font-weight:700;letter-spacing:0.25px;left:356px;width:600px;text-align:right;">CORR W/</div>
<div class="t" style="top:408.47px;font-size:6.9px;color:#dcdde0;font-weight:700;letter-spacing:0.25px;left:356px;width:600px;text-align:right;">META MODEL</div>
<div class="t" style="top:398.57px;font-size:6.9px;color:#dcdde0;font-weight:700;letter-spacing:0.25px;left:411px;width:600px;text-align:right;">PAYOUT</div>
<div class="t" style="top:408.47px;font-size:6.9px;color:#dcdde0;font-weight:700;letter-spacing:0.25px;left:411px;width:600px;text-align:right;">FACTOR</div>
<div class="r" style="left:366px;top:423px;width:706px;height:1px;background:#1b1e25;"></div>
<div class="r" style="left:366px;top:446px;width:706px;height:1px;background:#1b1e25;"></div>
<div class="r" style="left:366px;top:470px;width:706px;height:1px;background:#1b1e25;"></div>
<div class="r" style="left:366px;top:494px;width:706px;height:1px;background:#1b1e25;"></div>
<div class="r" style="left:366px;top:517px;width:706px;height:1px;background:#1b1e25;"></div>
<div class="r" style="left:366px;top:541px;width:706px;height:1px;background:#1b1e25;"></div>
<div class="t" style="top:431.37px;font-size:8.2px;color:#e6e7e9;left:372px;-webkit-text-stroke:0.12px #e6e7e9;">334</div>
<div class="t" style="top:431.37px;font-size:8.2px;color:#e6e7e9;left:-118px;width:600px;text-align:right;-webkit-text-stroke:0.12px #e6e7e9;">Oct 20</div>
<div class="t" style="top:431.37px;font-size:8.2px;color:#3b8fd8;left:-61px;width:600px;text-align:right;-webkit-text-stroke:0.12px #3b8fd8;">4 NMR</div>
<div class="t" style="top:431.37px;font-size:8.2px;color:#e6e7e9;letter-spacing:-0.45px;left:15px;width:600px;text-align:right;-webkit-text-stroke:0.12px #e6e7e9;">2×TC</div>
<div class="r" style="left:664px;top:435px;width:6px;height:1px;background:#3e4148;"></div>
<div class="r" style="left:720px;top:435px;width:6px;height:1px;background:#3e4148;"></div>
<div class="r" style="left:770px;top:435px;width:6px;height:1px;background:#3e4148;"></div>
<div class="r" style="left:821px;top:435px;width:6px;height:1px;background:#3e4148;"></div>
<div class="r" style="left:871px;top:435px;width:6px;height:1px;background:#3e4148;"></div>
<div class="r" style="left:950px;top:435px;width:6px;height:1px;background:#3e4148;"></div>
<div class="r" style="left:1007.5px;top:435px;width:3.5px;height:1px;background:#3e4148;"></div>
<div class="t" style="top:431.37px;font-size:8.2px;color:#55585e;left:465px;width:600px;text-align:right;-webkit-text-stroke:0.12px #55585e;">0 NMR</div>
<div class="t" style="top:455.27px;font-size:8.2px;color:#e6e7e9;left:372px;-webkit-text-stroke:0.12px #e6e7e9;">333</div>
<div class="t" style="top:455.27px;font-size:8.2px;color:#e6e7e9;left:-118px;width:600px;text-align:right;-webkit-text-stroke:0.12px #e6e7e9;">Oct 13</div>
<div class="r" style="left:533px;top:459px;width:6px;height:1px;background:#3e4148;"></div>
<div class="t" style="top:455.27px;font-size:8.2px;color:#e6e7e9;letter-spacing:-0.45px;left:15px;width:600px;text-align:right;-webkit-text-stroke:0.12px #e6e7e9;">1×CORR</div>
<div class="t" style="top:455.27px;font-size:8.2px;color:#e6e7e9;left:70px;width:600px;text-align:right;-webkit-text-stroke:0.12px #e6e7e9;">0.0032</div>
<div class="r" style="left:720px;top:459px;width:6px;height:1px;background:#3e4148;"></div>
<div class="t" style="top:455.27px;font-size:8.2px;color:#e6e7e9;left:176px;width:600px;text-align:right;-webkit-text-stroke:0.12px #e6e7e9;">0.0086</div>
<div class="t" style="top:455.27px;font-size:8.2px;color:#e6e7e9;left:227px;width:600px;text-align:right;-webkit-text-stroke:0.12px #e6e7e9;">0.0095</div>
<div class="t" style="top:455.27px;font-size:8.2px;color:#9a7ddd;left:277px;width:600px;text-align:right;-webkit-text-stroke:0.12px #9a7ddd;">0.0044</div>
<div class="t" style="top:455.27px;font-size:8.2px;color:#e6e7e9;left:356px;width:600px;text-align:right;-webkit-text-stroke:0.12px #e6e7e9;">0.3168</div>
<div class="t" style="top:455.27px;font-size:8.2px;color:#e6e7e9;left:411px;width:600px;text-align:right;-webkit-text-stroke:0.12px #e6e7e9;">0.3783</div>
<div class="t" style="top:455.27px;font-size:8.2px;color:#55585e;left:465px;width:600px;text-align:right;-webkit-text-stroke:0.12px #55585e;">0 NMR</div>
<div class="t" style="top:479.27px;font-size:8.2px;color:#e6e7e9;left:372px;-webkit-text-stroke:0.12px #e6e7e9;">332</div>
<div class="t" style="top:479.27px;font-size:8.2px;color:#e6e7e9;left:-118px;width:600px;text-align:right;-webkit-text-stroke:0.12px #e6e7e9;">Oct 6</div>
<div class="r" style="left:533px;top:483px;width:6px;height:1px;background:#3e4148;"></div>
<div class="t" style="top:479.27px;font-size:8.2px;color:#e6e7e9;letter-spacing:-0.45px;left:15px;width:600px;text-align:right;-webkit-text-stroke:0.12px #e6e7e9;">1×CORR</div>
<div class="t" style="top:479.27px;font-size:8.2px;color:#e6e7e9;left:70px;width:600px;text-align:right;-webkit-text-stroke:0.12px #e6e7e9;">0.0107</div>
<div class="r" style="left:720px;top:483px;width:6px;height:1px;background:#3e4148;"></div>
<div class="t" style="top:479.27px;font-size:8.2px;color:#e6e7e9;left:176px;width:600px;text-align:right;-webkit-text-stroke:0.12px #e6e7e9;">0.0167</div>
<div class="t" style="top:479.27px;font-size:8.2px;color:#e6e7e9;left:227px;width:600px;text-align:right;-webkit-text-stroke:0.12px #e6e7e9;">0.0165</div>
<div class="t" style="top:479.27px;font-size:8.2px;color:#9a7ddd;left:277px;width:600px;text-align:right;-webkit-text-stroke:0.12px #9a7ddd;">0.0502</div>
<div class="t" style="top:479.27px;font-size:8.2px;color:#e6e7e9;left:356px;width:600px;text-align:right;-webkit-text-stroke:0.12px #e6e7e9;">0.3257</div>
<div class="t" style="top:479.27px;font-size:8.2px;color:#e6e7e9;left:411px;width:600px;text-align:right;-webkit-text-stroke:0.12px #e6e7e9;">0.3776</div>
<div class="t" style="top:479.27px;font-size:8.2px;color:#55585e;left:465px;width:600px;text-align:right;-webkit-text-stroke:0.12px #55585e;">0 NMR</div>
<div class="t" style="top:502.97px;font-size:8.2px;color:#e6e7e9;left:372px;-webkit-text-stroke:0.12px #e6e7e9;">331</div>
<div class="t" style="top:502.97px;font-size:8.2px;color:#e6e7e9;left:-118px;width:600px;text-align:right;-webkit-text-stroke:0.12px #e6e7e9;">Sep 29</div>
<div class="r" style="left:533px;top:507px;width:6px;height:1px;background:#3e4148;"></div>
<div class="t" style="top:502.97px;font-size:8.2px;color:#e6e7e9;letter-spacing:-0.45px;left:15px;width:600px;text-align:right;-webkit-text-stroke:0.12px #e6e7e9;">1×CORR</div>
<div class="t" style="top:502.97px;font-size:8.2px;color:#e6e7e9;left:70px;width:600px;text-align:right;-webkit-text-stroke:0.12px #e6e7e9;">-0.0008</div>
<div class="r" style="left:720px;top:507px;width:6px;height:1px;background:#3e4148;"></div>
<div class="t" style="top:502.97px;font-size:8.2px;color:#e6e7e9;left:176px;width:600px;text-align:right;-webkit-text-stroke:0.12px #e6e7e9;">0.0094</div>
<div class="t" style="top:502.97px;font-size:8.2px;color:#e6e7e9;left:227px;width:600px;text-align:right;-webkit-text-stroke:0.12px #e6e7e9;">0.0153</div>
<div class="t" style="top:502.97px;font-size:8.2px;color:#9a7ddd;left:277px;width:600px;text-align:right;-webkit-text-stroke:0.12px #9a7ddd;">0.0122</div>
<div class="t" style="top:502.97px;font-size:8.2px;color:#e6e7e9;left:356px;width:600px;text-align:right;-webkit-text-stroke:0.12px #e6e7e9;">0.3086</div>
<div class="t" style="top:502.97px;font-size:8.2px;color:#e6e7e9;left:411px;width:600px;text-align:right;-webkit-text-stroke:0.12px #e6e7e9;">0.3728</div>
<div class="t" style="top:502.97px;font-size:8.2px;color:#55585e;left:465px;width:600px;text-align:right;-webkit-text-stroke:0.12px #55585e;">0 NMR</div>
<div class="t" style="top:525.87px;font-size:8.2px;color:#e6e7e9;left:372px;-webkit-text-stroke:0.12px #e6e7e9;">330</div>
<div class="t" style="top:525.87px;font-size:8.2px;color:#e6e7e9;letter-spacing:-0.2px;left:-118px;width:600px;text-align:right;-webkit-text-stroke:0.12px #e6e7e9;">Resolved</div>
<div class="r" style="left:533px;top:530px;width:6px;height:1px;background:#3e4148;"></div>
<div class="t" style="top:525.87px;font-size:8.2px;color:#e6e7e9;letter-spacing:-0.45px;left:15px;width:600px;text-align:right;-webkit-text-stroke:0.12px #e6e7e9;">1×CORR</div>
<div class="t" style="top:525.87px;font-size:8.2px;color:#e6e7e9;left:70px;width:600px;text-align:right;-webkit-text-stroke:0.12px #e6e7e9;">0.0179</div>
<div class="r" style="left:720px;top:530px;width:6px;height:1px;background:#3e4148;"></div>
<div class="t" style="top:525.87px;font-size:8.2px;color:#e6e7e9;left:176px;width:600px;text-align:right;-webkit-text-stroke:0.12px #e6e7e9;">0.0270</div>
<div class="t" style="top:525.87px;font-size:8.2px;color:#e6e7e9;left:227px;width:600px;text-align:right;-webkit-text-stroke:0.12px #e6e7e9;">0.0254</div>
<div class="t" style="top:525.87px;font-size:8.2px;color:#9a7ddd;left:277px;width:600px;text-align:right;-webkit-text-stroke:0.12px #9a7ddd;">0.1572</div>
<div class="t" style="top:525.87px;font-size:8.2px;color:#e6e7e9;left:356px;width:600px;text-align:right;-webkit-text-stroke:0.12px #e6e7e9;">0.3019</div>
<div class="t" style="top:525.87px;font-size:8.2px;color:#e6e7e9;left:411px;width:600px;text-align:right;-webkit-text-stroke:0.12px #e6e7e9;">0.3815</div>
<div class="t" style="top:525.87px;font-size:8.2px;color:#55585e;left:465px;width:600px;text-align:right;-webkit-text-stroke:0.12px #55585e;">0 NMR</div>
<div class="t" style="top:549.27px;font-size:8.2px;color:#e6e7e9;left:372px;-webkit-text-stroke:0.12px #e6e7e9;">329</div>
<div class="t" style="top:549.27px;font-size:8.2px;color:#e6e7e9;letter-spacing:-0.2px;left:-118px;width:600px;text-align:right;-webkit-text-stroke:0.12px #e6e7e9;">Resolved</div>
<div class="r" style="left:533px;top:553px;width:6px;height:1px;background:#3e4148;"></div>
<div class="t" style="top:549.27px;font-size:8.2px;color:#e6e7e9;letter-spacing:-0.45px;left:15px;width:600px;text-align:right;-webkit-text-stroke:0.12px #e6e7e9;">1×CORR</div>
<div class="t" style="top:549.27px;font-size:8.2px;color:#e6e7e9;left:70px;width:600px;text-align:right;-webkit-text-stroke:0.12px #e6e7e9;">0.0528</div>
<div class="t" style="top:549.27px;font-size:8.2px;color:#e6e7e9;left:126px;width:600px;text-align:right;-webkit-text-stroke:0.12px #e6e7e9;">0.0267</div>
<div class="t" style="top:549.27px;font-size:8.2px;color:#e6e7e9;left:176px;width:600px;text-align:right;-webkit-text-stroke:0.12px #e6e7e9;">0.0507</div>
<div class="t" style="top:549.27px;font-size:8.2px;color:#e6e7e9;left:227px;width:600px;text-align:right;-webkit-text-stroke:0.12px #e6e7e9;">0.0455</div>
<div class="t" style="top:549.27px;font-size:8.2px;color:#9a7ddd;left:277px;width:600px;text-align:right;-webkit-text-stroke:0.12px #9a7ddd;">0.1806</div>
<div class="t" style="top:549.27px;font-size:8.2px;color:#e6e7e9;left:356px;width:600px;text-align:right;-webkit-text-stroke:0.12px #e6e7e9;">0.3085</div>
<div class="t" style="top:549.27px;font-size:8.2px;color:#e6e7e9;left:411px;width:600px;text-align:right;-webkit-text-stroke:0.12px #e6e7e9;">0.4014</div>
<div class="t" style="top:549.27px;font-size:8.2px;color:#55585e;left:465px;width:600px;text-align:right;-webkit-text-stroke:0.12px #55585e;">0 NMR</div>
<div class="r" style="left:366px;top:568.5px;width:706px;height:25px;background:#1b1e27;border:1px solid #292c35;border-radius:3px"></div>
<div class="t" style="top:577.61px;font-size:7.8px;color:#ededed;font-weight:700;left:218.5px;width:1000px;text-align:center;">All Rounds</div>
<div class="card" style="left:358px;top:612px;width:722px;height:100px"></div>
<div class="t" style="top:628.12px;font-size:12.4px;color:#f2f2f2;left:370.5px;-webkit-text-stroke:0.4px #f2f2f2;">Rank</div>
<div class="t" style="top:642.84px;font-size:8.47px;color:#c9cacd;left:370.5px;">This model’s rank by reputation score amongst all participating models.</div>
</body></html>
